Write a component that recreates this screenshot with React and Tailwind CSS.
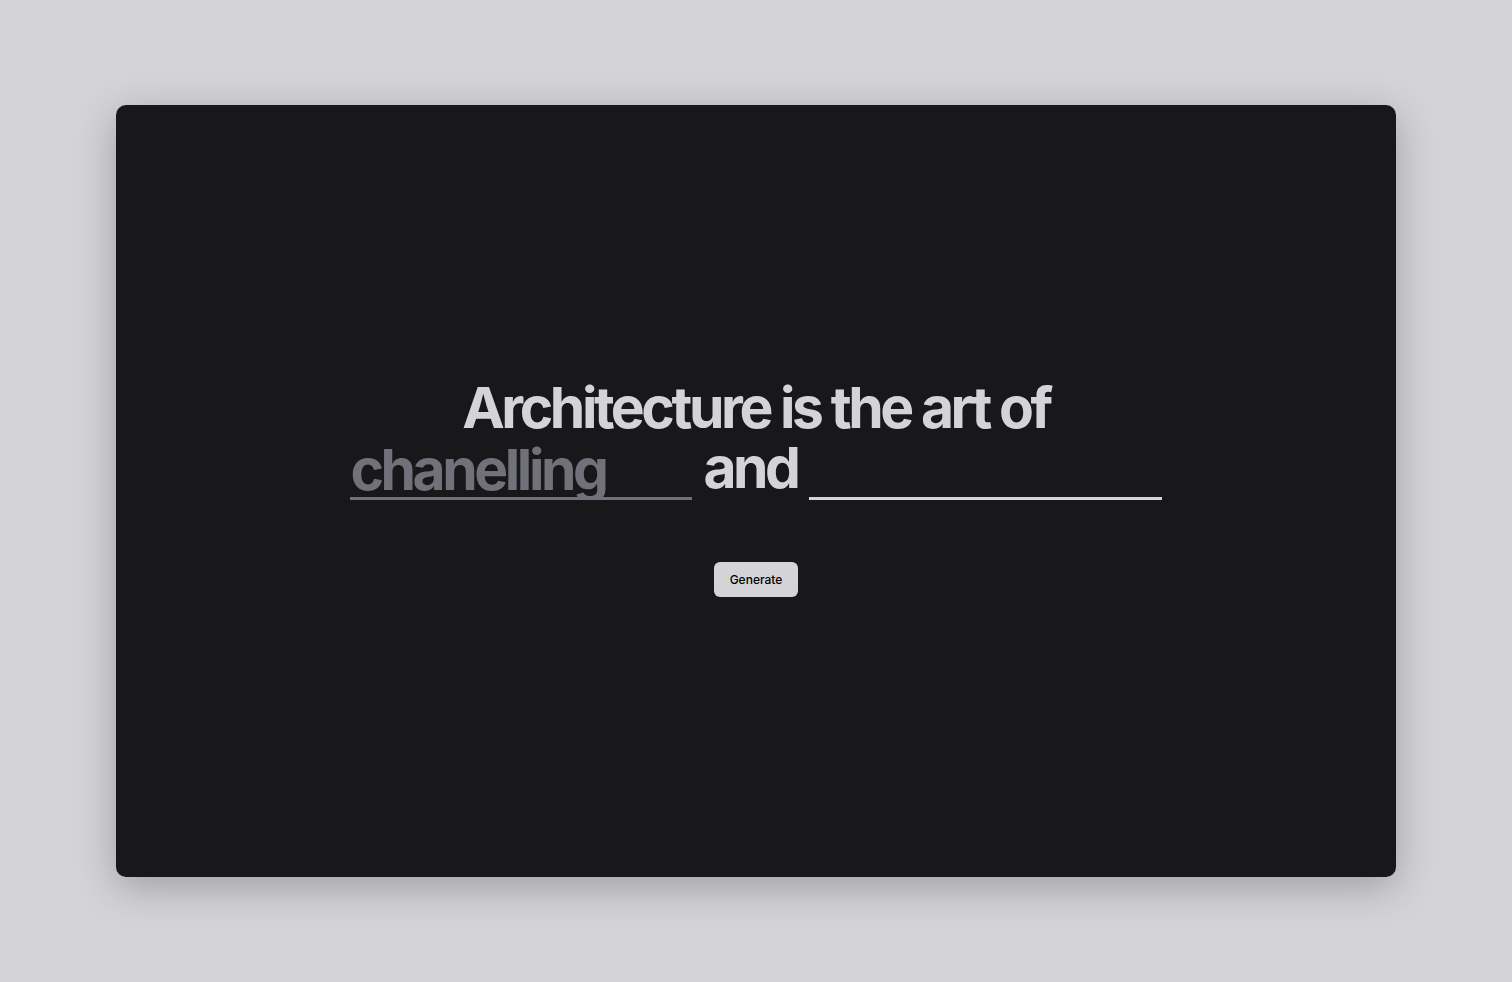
import React, { useState } from "react";

export default function App() {
  const [first, setFirst] = useState("");
  const [second, setSecond] = useState("");

  return (
    <div
      className="min-h-screen bg-[#d4d4d8] flex items-center justify-center"
      style={{ fontFamily: "Inter, 'Noto Sans', sans-serif" }}
    >
      <div className="w-[1280px] h-[772px] pb-[6px] bg-[#18181b] rounded-[10px] shadow-[0_10px_40px_rgba(0,0,0,0.25)] flex flex-col items-center justify-center">
        <h1 className="text-[57px] leading-[58px] font-bold tracking-[-0.06em] text-[#d4d4d8] text-center">
          <div className="mb-[2px]">Architecture is the art of</div>
          <div className="flex items-end justify-center gap-[11px]">
            <input
              className="w-[342px] h-[58px] bg-transparent border-b-[3px] border-[#71717a] text-[#d4d4d8] placeholder:text-[#71717a] outline-none font-bold tracking-[-0.06em]"
              placeholder="chanelling"
              value={first}
              onChange={(e) => setFirst(e.target.value)}
            />
            <span className="pb-[3px]">and</span>
            <input
              className="w-[353px] h-[58px] bg-transparent border-b-[3px] border-[#d4d4d8] text-[#d4d4d8] outline-none font-bold tracking-[-0.06em]"
              value={second}
              onChange={(e) => setSecond(e.target.value)}
            />
          </div>
        </h1>
        <button className="mt-[62px] bg-[#d4d4d8] text-black text-[12px] font-medium rounded-md px-4 h-[35px]">
          Generate
        </button>
      </div>
    </div>
  );
}
